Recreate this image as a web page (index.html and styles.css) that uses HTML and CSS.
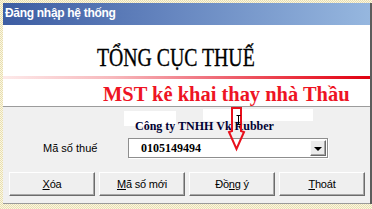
FILE: index.html
```html
<!DOCTYPE html>
<html lang="vi">
<head>
<meta charset="utf-8">
<title>Đăng nhập hệ thống</title>
<link rel="stylesheet" href="styles.css">
</head>
<body>
<div class="window">
  <div class="titlebar">Đăng nhập hệ thống</div>
  <div class="header">
    <div class="title-row"><span class="title">TỔNG CỤC THUẾ</span></div>
    <div class="red-rule"></div>
    <div class="sub-row"><span class="subtitle">MST kê khai thay nhà Thầu</span></div>
  </div>
  <div class="body">
    <div class="blank blank-a"></div>
    <div class="blank blank-b"></div>
    <div class="company">Công ty TNHH Vk Rubber</div>
    <div class="field-row">
      <label class="field-label">Mã số thuế</label>
      <div class="combo">
        <span class="combo-value">0105149494</span>
        <span class="combo-btn"><span class="tri"></span></span>
      </div>
    </div>
    <div class="buttons">
      <button class="btn"><u>X</u>óa</button>
      <button class="btn"><u>M</u>ã số mới</button>
      <button class="btn">Đồ<u>n</u>g ý</button>
      <button class="btn"><u>T</u>hoát</button>
    </div>
  </div>
  <svg class="annot" viewBox="0 0 372 209" width="372" height="209">
    <path d="M232 108 L232 131 L229 132 L236.5 149 L244 132 L241 131 L241 108 Z" fill="none" stroke="#e8101c" stroke-width="2" stroke-linejoin="miter"/>
    <path d="M238.5 115 V124 M236.5 115.5 H240.5 M236.5 124.5 H240.5" stroke="#000" stroke-width="1" fill="none"/>
  </svg>
</div>
</body>
</html>
```

FILE: styles.css
```css
html, body {
  margin: 0;
  padding: 0;
}
body {
  width: 372px;
  height: 209px;
  overflow: hidden;
  font-family: "Liberation Sans", Arial, sans-serif;
  background-color: #f3edcf;
  background-image: repeating-conic-gradient(#fbf7e0 0 25%, #e7ddb2 0 50%);
  background-size: 2px 2px;
}
.window {
  position: relative;
  margin: 3px 0 0 3px;
  width: 367px;
  border-right: 2px solid #5c5c5c;
}
.titlebar {
  height: 22px;
  box-sizing: border-box;
  padding: 0 0 2px 2px;
  line-height: 20px;
  font-weight: bold;
  font-size: 12px;
  letter-spacing: -0.3px;
  color: #fff;
  background: linear-gradient(to right, #3d5da2, #6585bf 45%, #96b7df);
}
.header {
  background: #fff;
  height: 82px;
  box-sizing: border-box;
  padding-top: 18px;
  border-bottom: 1px solid #9c9c9c;
}
.title-row {
  height: 30px;
  line-height: 30px;
  padding-left: 94px;
}
.title {
  display: inline-block;
  font-family: "Liberation Serif", "Times New Roman", serif;
  font-size: 26px;
  color: #000;
  -webkit-text-stroke: 0.35px #000;
  transform: scaleX(0.76);
  transform-origin: left center;
}
.red-rule {
  margin-top: 3px;
  height: 3px;
  background: linear-gradient(to right, #fdeaea 0%, #f7b8bc 30%, #f07480 55%, #ea2a38 82%, #e00010 100%);
}
.sub-row {
  margin-top: 3px;
  height: 24px;
  line-height: 24px;
  padding-left: 100px;
}
.subtitle {
  display: inline-block;
  font-family: "Liberation Serif", "Times New Roman", serif;
  font-weight: bold;
  font-size: 22px;
  color: #ee1424;
  transform: scaleX(0.93);
  transform-origin: left center;
  white-space: nowrap;
}
.body {
  position: relative;
  background: #f0f0f0;
  height: 97px;
  box-sizing: border-box;
  padding-top: 12px;
  border-bottom: 1px solid #9a9a9a;
}
.blank {
  position: absolute;
  background: #fff;
}
.blank-a {
  left: 121px;
  top: 4px;
  width: 52px;
  height: 15px;
}
.blank-b {
  left: 200px;
  top: 2px;
  width: 110px;
  height: 12px;
}
.company {
  position: relative;
  height: 14px;
  line-height: 14px;
  padding-left: 132px;
  font-family: "Liberation Serif", "Times New Roman", serif;
  font-weight: bold;
  font-size: 12px;
  color: #000033;
}
.field-row {
  margin-top: 5px;
  height: 20px;
  display: flex;
  align-items: center;
}
.field-label {
  width: 125px;
  box-sizing: border-box;
  padding-left: 40px;
  font-size: 11px;
  line-height: 20px;
  color: #000;
}
.combo {
  width: 200px;
  height: 20px;
  box-sizing: border-box;
  display: flex;
  align-items: center;
  background: #fff;
  border: 1px solid #8e8e8e;
  box-shadow: 1px 1px 0 #ffffff;
}
.combo-value {
  flex: 1;
  padding-left: 12px;
  line-height: 18px;
  font-family: "Liberation Serif", "Times New Roman", serif;
  font-weight: bold;
  font-size: 12px;
  color: #000;
}
.combo-btn {
  width: 16px;
  height: 16px;
  margin: 1px;
  box-sizing: border-box;
  display: flex;
  align-items: center;
  justify-content: center;
  background: #ececec;
  border: 1px solid;
  border-color: #fdfdfd #6a6a6a #6a6a6a #fdfdfd;
  box-shadow: inset -1px -1px 0 #a6a6a6;
}
.tri {
  width: 0;
  height: 0;
  border-left: 4px solid transparent;
  border-right: 4px solid transparent;
  border-top: 4px solid #000;
  margin-top: 1px;
}
.buttons {
  margin-top: 14px;
  padding-left: 6px;
  display: flex;
  gap: 4px;
}
.btn {
  width: 86px;
  height: 24px;
  box-sizing: border-box;
  padding: 0;
  margin: 0;
  font-family: "Liberation Sans", Arial, sans-serif;
  font-size: 11px;
  letter-spacing: -0.2px;
  color: #000;
  background: #efefef;
  border: 1px solid;
  border-color: #ffffff #6c6c6c #6c6c6c #ffffff;
  box-shadow: inset -1px -1px 0 #a8a8a8;
  border-radius: 0;
}
.btn u {
  text-decoration-thickness: 1px;
}
.annot {
  position: absolute;
  left: -3px;
  top: -3px;
  pointer-events: none;
}
```
